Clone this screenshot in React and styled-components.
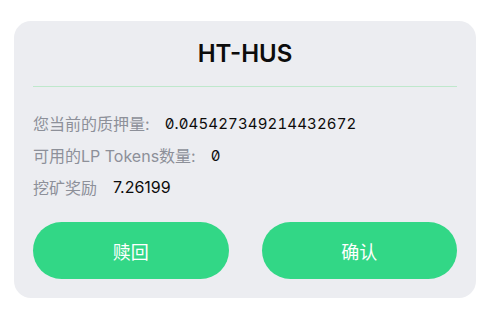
import styled, { createGlobalStyle } from "styled-components";

const GlobalStyle = createGlobalStyle`
  body {
    margin: 0;
    background: #fff;
    font-family: Inter, "Noto Sans CJK SC", sans-serif;
  }
`;

const Page = styled.div`
  padding: 21px 17px 0 14px;
`;

const Card = styled.div`
  background: #ecedf1;
  border-radius: 17px;
  padding: 0 19px 19px;
`;

const Title = styled.h2`
  margin: 0;
  height: 65px;
  line-height: 65px;
  text-align: center;
  font-size: 24px;
  font-weight: 600;
  color: #0c0c0c;
`;

const Divider = styled.div`
  height: 1px;
  background: #bfe8cc;
`;

const List = styled.div`
  margin-top: 20px;
`;

const Row = styled.div`
  display: flex;
  align-items: center;
  height: 32px;
`;

const Label = styled.span`
  color: #8d9099;
  font-size: 16px;
`;

const Value = styled.span`
  margin-left: ${(p) => (p.$colon ? "15px" : "16px")};
  color: #0c0c0c;
  font-size: ${(p) => (p.$mono ? "15px" : "16px")};
  font-feature-settings: ${(p) => (p.$mono ? '"tnum", "zero"' : "normal")};
  letter-spacing: ${(p) => (p.$mono ? "0.15px" : "0")};
`;

const Actions = styled.div`
  display: flex;
  gap: 33px;
  margin-top: 19px;
`;

const Button = styled.button`
  flex: 1;
  height: 57px;
  border: none;
  border-radius: 29px;
  background: #32d786;
  color: #fff;
  font-family: Inter, "Noto Sans CJK SC", sans-serif;
  font-size: 18px;
  cursor: pointer;
`;

const rows = [
  { label: "您当前的质押量:", value: "0.045427349214432672", mono: true, colon: true },
  { label: "可用的LP Tokens数量:", value: "0", mono: true, colon: true },
  { label: "挖矿奖励", value: "7.26199", mono: false, colon: false },
];

const App = () => {
  return (
    <Page>
      <GlobalStyle />
      <Card>
        <Title>HT-HUS</Title>
        <Divider />
        <List>
          {rows.map((r) => (
            <Row key={r.label}>
              <Label>{r.label}</Label>
              <Value $mono={r.mono} $colon={r.colon}>{r.value}</Value>
            </Row>
          ))}
        </List>
        <Actions>
          <Button>赎回</Button>
          <Button>确认</Button>
        </Actions>
      </Card>
    </Page>
  );
};

export default App;
